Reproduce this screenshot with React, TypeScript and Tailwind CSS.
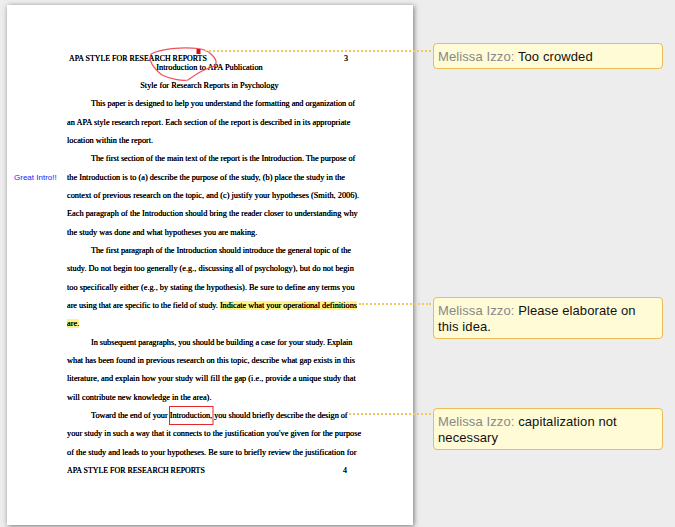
const body: { text: React.ReactNode; indent?: boolean; tight?: boolean }[] = [
  { text: "This paper is designed to help you understand the formatting and organization of", indent: true },
  { text: "an APA style research report. Each section of the report is described in its appropriate" },
  { text: "location within the report." },
  { text: "The first section of the main text of the report is the Introduction. The purpose of", indent: true },
  { text: "the Introduction is to (a) describe the purpose of the study, (b) place the study in the" },
  { text: "context of previous research on the topic, and (c) justify your hypotheses (Smith, 2006)." },
  { text: "Each paragraph of the Introduction should bring the reader closer to understanding why" },
  { text: "the study was done and what hypotheses you are making." },
  { text: "The first paragraph of the Introduction should introduce the general topic of the", indent: true },
  { text: "study. Do not begin too generally (e.g., discussing all of psychology), but do not begin" },
  { text: "too specifically either (e.g., by stating the hypothesis). Be sure to define any terms you" },
  {
    tight: true,
    text: (
      <>
        are using that are specific to the field of study.{" "}
        <span className="bg-[#fff380]">Indicate what your operational definitions</span>
      </>
    ),
  },
  { text: <span className="bg-[#fff380]">are.</span> },
  { text: "In subsequent paragraphs, you should be building a case for your study. Explain", indent: true },
  { text: "what has been found in previous research on this topic, describe what gap exists in this" },
  { text: "literature, and explain how your study will fill the gap (i.e., provide a unique study that" },
  { text: "will contribute new knowledge in the area)." },
  { text: "Toward the end of your Introduction, you should briefly describe the design of", indent: true },
  { text: "your study in such a way that it connects to the justification you've given for the purpose" },
  { text: "of the study and leads to your hypotheses. Be sure to briefly review the justification for" },
];

function Note({ text, className }: { text: string; className: string }) {
  return (
    <div className={`w-[230px] rounded-[4px] border border-[#ecbc55] bg-[#fffbd6] pb-[3px] pl-[4px] pr-[8px] pt-[5px] text-[13px] leading-[16px] tracking-[0.1px] text-[#111] ${className}`}>
      <span className="text-[#888]">Melissa Izzo: </span>
      {text}
    </div>
  );
}

export default function App() {
  return (
    <div className="relative flex h-[527px] w-[675px] overflow-hidden bg-[#ededed] font-['Liberation_Sans',sans-serif]">
      <div className="ml-[7px] mt-[5px] h-[520px] w-[406px] bg-white pl-[60px] pt-[44.5px] font-['Liberation_Serif',serif] text-[8.3px] leading-[18.33px] text-black shadow-[1px_1px_5px_rgba(0,0,0,0.5)] [text-shadow:0_0_0.2px_#000]">
        <div className="-mb-[9px] flex h-[18.33px] w-[281px] justify-between pl-[2px] text-[7.9px]">
          <span>APA STYLE FOR RESEARCH REPORTS</span>
          <span>3</span>
        </div>
        <div className="h-[18.33px] w-[285px] text-center">Introduction to APA Publication</div>
        <div className="h-[18.33px] w-[285px] text-center">Style for Research Reports in Psychology</div>
        {body.map((line, i) => (
          <div
            key={i}
            className={`h-[18.33px] whitespace-nowrap ${line.indent ? "pl-[24px] tracking-[-0.05px]" : ""} ${line.tight ? "tracking-[-0.05px]" : ""}`}
          >
            {line.text}
          </div>
        ))}
        <div className="flex h-[18.33px] w-[280px] justify-between text-[7.9px]">
          <span>APA STYLE FOR RESEARCH REPORTS</span>
          <span>4</span>
        </div>
      </div>

      <div className="ml-[20px] flex flex-col">
        <Note className="mt-[43px]" text="Too crowded" />
        <Note className="mt-[228px]" text="Please elaborate on this idea." />
        <Note className="mt-[69px]" text="capitalization not necessary" />
      </div>

      {/* review marks sit over the page */}
      <div className="absolute left-[14px] top-[172px] text-[8px] leading-[12px] text-[#1a1aff]">Great Intro!!</div>
      <svg className="absolute left-0 top-0" width="675" height="527" fill="none">
        <path
          d="M198 48.5 C182 46.5 160 49 151 54 C148 60 153 68 162 75 C170 79 182 81 188 80 C195 75 200 71 209 68 C219 66 217 60 212 55 C207 50 203 49 198 48.5 Z"
          stroke="#f0505a"
          strokeWidth="1.2"
        />
        <rect x="196.5" y="49" width="4" height="5" fill="#d40f14" />
        <rect x="169.5" y="406.5" width="43.5" height="18" stroke="#e2282d" strokeWidth="1" />
      </svg>
      <div className="absolute left-[205px] top-[50px] h-0 w-[226px] border-t-2 border-dotted border-[#f0c765]" />
      <div className="absolute left-[359px] top-[303px] h-0 w-[72px] border-t-2 border-dotted border-[#f0c765]" />
      <div className="absolute left-[349px] top-[413px] h-0 w-[82px] border-t-2 border-dotted border-[#f0c765]" />
    </div>
  );
}
